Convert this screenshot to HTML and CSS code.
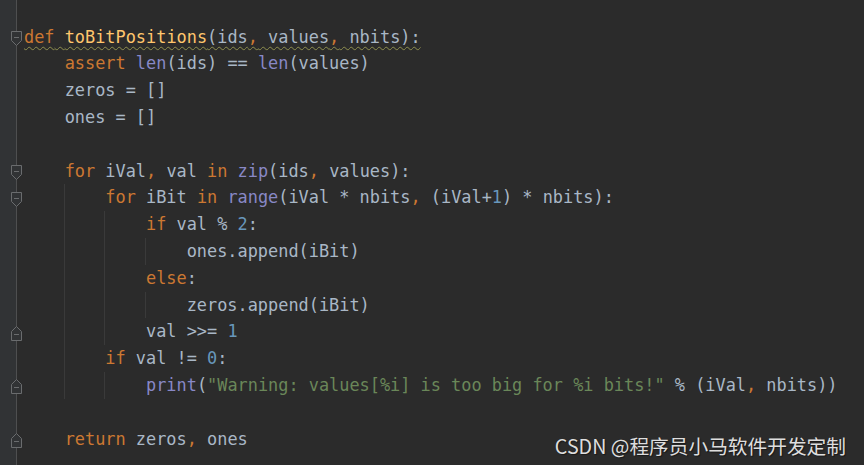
FILE: index.html
```html
<!DOCTYPE html>
<html lang="en">
<head>
<meta charset="utf-8">
<title>toBitPositions</title>
<link rel="stylesheet" href="styles.css">
</head>
<body>
<div class="editor">
  <div class="line">
    <span class="fold"><svg class="mk" viewBox="0 0 11 15" width="11" height="15"><path d="M0.5 0.5H10.5V9.5L5.5 14.5L0.5 9.5Z"/><path d="M3 6.5H8"/></svg></span>
    <span class="txt wavy"><span class="k">def</span> <span class="f">toBitPositions</span>(ids<span class="k">,</span> values<span class="k">,</span> nbits):</span>
  </div>
  <div class="line">
    <span class="fold"></span><span class="ind"></span>
    <span class="txt"><span class="k">assert</span> <span class="b">len</span>(ids) == <span class="b">len</span>(values)</span>
  </div>
  <div class="line">
    <span class="fold"></span><span class="ind"></span>
    <span class="txt">zeros = []</span>
  </div>
  <div class="line">
    <span class="fold"></span><span class="ind"></span>
    <span class="txt">ones = []</span>
  </div>
  <div class="line">
    <span class="fold"></span>
  </div>
  <div class="line">
    <span class="fold"><svg class="mk" viewBox="0 0 11 15" width="11" height="15"><path d="M0.5 0.5H10.5V9.5L5.5 14.5L0.5 9.5Z"/><path d="M3 6.5H8"/></svg></span><span class="ind"></span>
    <span class="txt"><span class="k">for</span> iVal<span class="k">,</span> val <span class="k">in</span> <span class="b">zip</span>(ids<span class="k">,</span> values):</span>
  </div>
  <div class="line">
    <span class="fold"><svg class="mk" viewBox="0 0 11 15" width="11" height="15"><path d="M0.5 0.5H10.5V9.5L5.5 14.5L0.5 9.5Z"/><path d="M3 6.5H8"/></svg></span><span class="ind"></span><span class="ind g"></span>
    <span class="txt"><span class="k">for</span> iBit <span class="k">in</span> <span class="b">range</span>(iVal * nbits<span class="k">,</span> (iVal+<span class="n">1</span>) * nbits):</span>
  </div>
  <div class="line">
    <span class="fold"></span><span class="ind"></span><span class="ind g"></span><span class="ind g"></span>
    <span class="txt"><span class="k">if</span> val % <span class="n">2</span>:</span>
  </div>
  <div class="line">
    <span class="fold"></span><span class="ind"></span><span class="ind g"></span><span class="ind g"></span><span class="ind g"></span>
    <span class="txt">ones.append(iBit)</span>
  </div>
  <div class="line">
    <span class="fold"></span><span class="ind"></span><span class="ind g"></span><span class="ind g"></span>
    <span class="txt"><span class="k">else</span>:</span>
  </div>
  <div class="line">
    <span class="fold"></span><span class="ind"></span><span class="ind g"></span><span class="ind g"></span><span class="ind g"></span>
    <span class="txt">zeros.append(iBit)</span>
  </div>
  <div class="line">
    <span class="fold"><svg class="mk" viewBox="0 0 11 15" width="11" height="15"><path d="M0.5 14.5H10.5V5.5L5.5 0.5L0.5 5.5Z"/><path d="M3 8.5H8"/></svg></span><span class="ind"></span><span class="ind g"></span><span class="ind g"></span>
    <span class="txt">val &gt;&gt;= <span class="n">1</span></span>
  </div>
  <div class="line">
    <span class="fold"></span><span class="ind"></span><span class="ind g"></span>
    <span class="txt"><span class="k">if</span> val != <span class="n">0</span>:</span>
  </div>
  <div class="line">
    <span class="fold"><svg class="mk" viewBox="0 0 11 15" width="11" height="15"><path d="M0.5 14.5H10.5V5.5L5.5 0.5L0.5 5.5Z"/><path d="M3 8.5H8"/></svg></span><span class="ind"></span><span class="ind g"></span><span class="ind g"></span>
    <span class="txt"><span class="b">print</span>(<span class="s">"Warning: values[%i] is too big for %i bits!"</span> % (iVal<span class="k">,</span> nbits))</span>
  </div>
  <div class="line">
    <span class="fold"></span>
  </div>
  <div class="line">
    <span class="fold"><svg class="mk" viewBox="0 0 11 15" width="11" height="15"><path d="M0.5 14.5H10.5V5.5L5.5 0.5L0.5 5.5Z"/><path d="M3 8.5H8"/></svg></span><span class="ind"></span>
    <span class="txt"><span class="k">return</span> zeros<span class="k">,</span> ones</span>
  </div>
  <div class="watermark">CSDN @程序员小马软件开发定制</div>
</div>
</body>
</html>
```

FILE: styles.css
```css
html, body {
  margin: 0;
  padding: 0;
  background: #2b2b2b;
}

.editor {
  position: relative;
  width: 864px;
  height: 465px;
  box-sizing: border-box;
  padding-top: 23.6px;
  overflow: hidden;
  background: linear-gradient(to right, #313335 0, #313335 16px, #4e4f50 16px, #4e4f50 17px, #2b2b2b 17px);
  font-family: "DejaVu Sans Mono", "Liberation Mono", monospace;
  font-size: 16.9px;
  color: #a9b7c6;
}

.line {
  display: flex;
  align-items: stretch;
  height: 26.8px;
}

.fold {
  flex: 0 0 24px;
  display: flex;
  align-items: center;
  padding-left: 11px;
  padding-top: 3px;
  box-sizing: border-box;
}

.mk {
  display: block;
}

.mk path {
  fill: #313335;
  stroke: #6a6c6e;
  stroke-width: 1;
}

.ind {
  flex: 0 0 4ch;
}

.ind.g {
  box-shadow: inset 1px 0 0 #3a3a3a;
  margin-left: -1px;
  margin-right: 1px;
}

.txt {
  white-space: pre;
  line-height: 26.8px;
}

.wavy {
  text-decoration: underline wavy #8f8f4e;
  text-decoration-thickness: 1px;
  text-underline-offset: 3px;
}

.k { color: #cc7832; }
.f { color: #ffc66d; }
.b { color: #8888c6; }
.n { color: #6897bb; }
.s { color: #6a8759; }

.watermark {
  position: absolute;
  right: 18px;
  bottom: 7px;
  font-family: "Noto Sans CJK SC", "Noto Sans", sans-serif;
  font-size: 19.7px;
  line-height: 24px;
  color: #dedede;
  text-shadow: 1px 1px 1px rgba(0, 0, 0, 0.45);
}
```
